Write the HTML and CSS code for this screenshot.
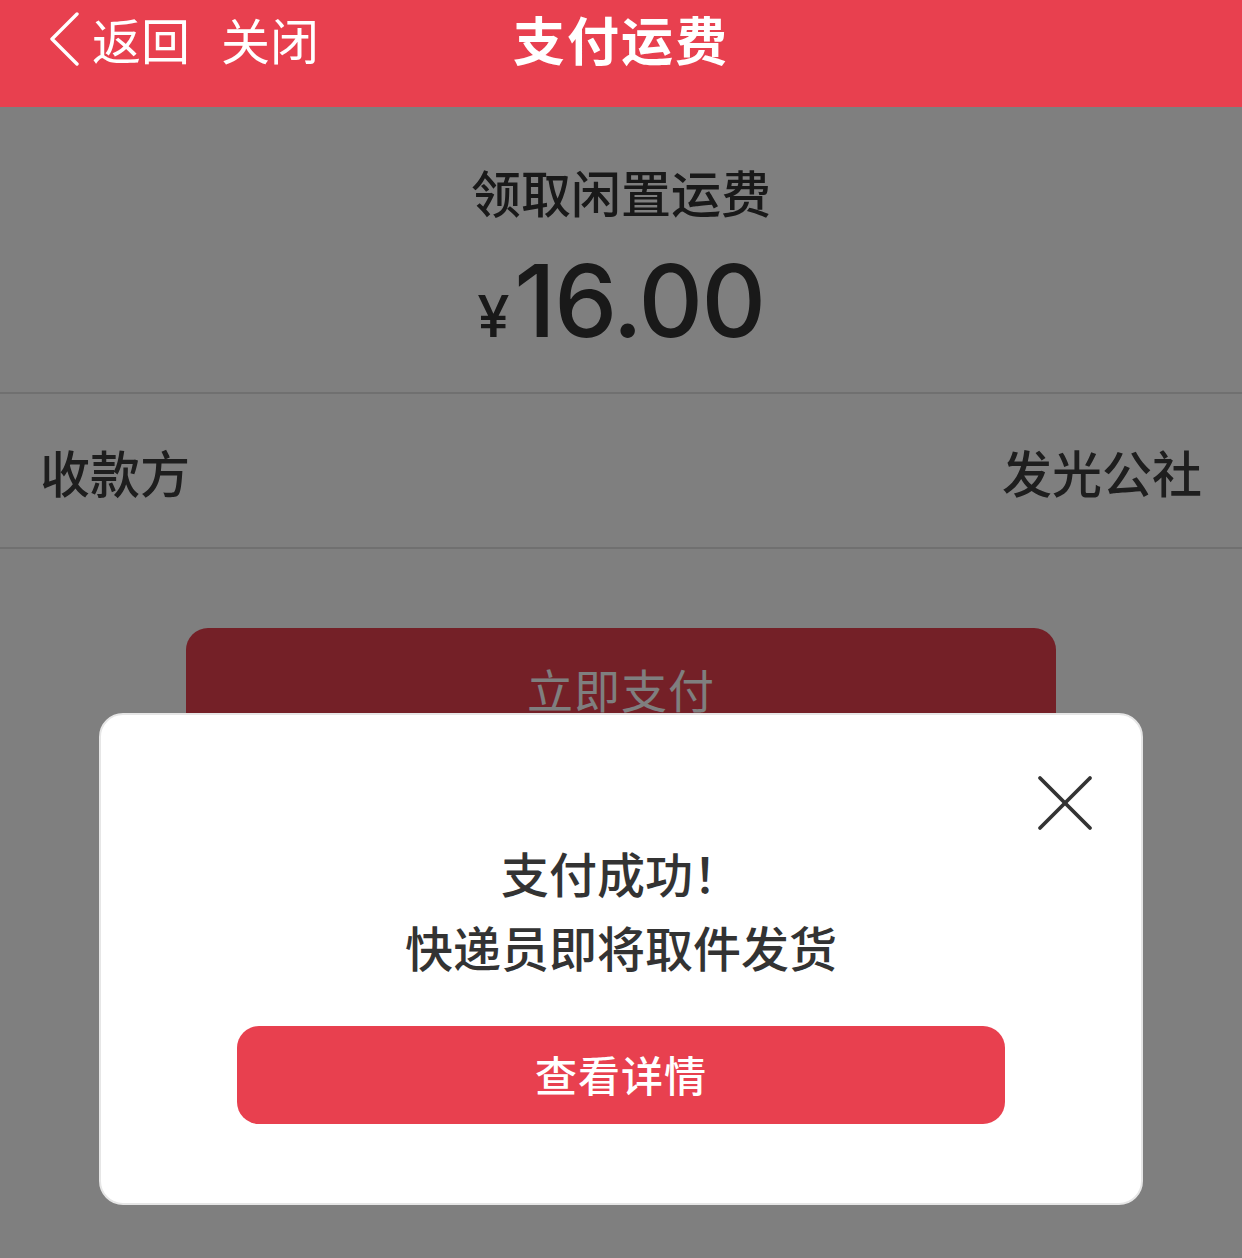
FILE: index.html
```html
<!DOCTYPE html>
<html lang="zh-CN">
<head>
    <meta charset="UTF-8">
    <meta name="viewport" content="width=device-width, initial-scale=1.0">
    <title>支付运费</title>
    <link rel="stylesheet" href="styles.css">
</head>
<body>

<div class="page">
    <!-- Top bar -->
    <header class="topbar">
        <div class="nav-left">
            <span class="nav-link back">
                <svg class="chevron" width="32" height="54" viewBox="0 0 32 54">
                    <polyline points="29,2 4,27 29,52" fill="none" stroke="#fff" stroke-width="3.4" stroke-linecap="round" stroke-linejoin="round"/>
                </svg>
                返回
            </span>
            <span class="nav-link">关闭</span>
        </div>
        <h1 class="title">支付运费</h1>
        <div class="nav-right"></div>
    </header>

    <!-- Order summary -->
    <section class="summary">
        <p class="summary-label">领取闲置运费</p>
        <p class="amount"><span class="currency">¥</span>16.00</p>
    </section>

    <div class="info-row">
        <span>收款方</span>
        <span>发光公社</span>
    </div>

    <div class="pay-wrap">
        <button class="pay-btn">立即支付</button>
    </div>

    <!-- Dim layer and result dialog -->
    <div class="mask"></div>
    <div class="dialog">
        <span class="dialog-close">
            <svg width="56" height="56" viewBox="0 0 56 56">
                <line x1="3" y1="3" x2="53" y2="53" stroke="#333" stroke-width="3.8" stroke-linecap="round"/>
                <line x1="53" y1="3" x2="3" y2="53" stroke="#333" stroke-width="3.8" stroke-linecap="round"/>
            </svg>
        </span>
        <div class="dialog-text">
            <p>支付成功！</p>
            <p>快递员即将取件发货</p>
        </div>
        <button class="detail-btn">查看详情</button>
    </div>
</div>

</body>
</html>
```

FILE: styles.css
```css
* {
    box-sizing: border-box;
}
body {
    margin: 0;
    font-family: "Noto Sans CJK SC", "Noto Sans", sans-serif;
    background-color: #fff;
    color: #333;
}
p {
    margin: 0;
}
.page {
    position: relative;
    width: 1242px;
    height: 1258px;
    overflow: hidden;
    background-color: #fff;
}
.topbar {
    display: grid;
    grid-template-columns: 1fr auto 1fr;
    align-items: center;
    height: 107px;
    padding-bottom: 30px;
    background-color: #e8404f;
    color: #fff;
}
.nav-left {
    display: flex;
    align-items: center;
    gap: 31px;
    padding-left: 48px;
}
.nav-link {
    display: flex;
    align-items: center;
    font-size: 49px;
    line-height: 1;
}
.chevron {
    margin-right: 12px;
}
.title {
    margin: 0;
    font-size: 52px;
    font-weight: bold;
    letter-spacing: 2px;
}
.summary {
    height: 287px;
    padding-top: 46px;
    text-align: center;
    border-bottom: 2px solid #e0e0e0;
}
.summary-label {
    font-size: 50px;
    font-weight: 500;
    line-height: 76px;
    color: #333;
}
.amount {
    margin-top: 22px;
    font-family: "Inter", "Noto Sans", sans-serif;
    font-size: 100px;
    font-weight: 500;
    line-height: 100px;
    letter-spacing: -1.5px;
    color: #333;
}
.currency {
    font-size: 58px;
    margin-right: 6px;
}
.info-row {
    display: flex;
    justify-content: space-between;
    align-items: center;
    height: 155px;
    padding: 0 40px;
    font-size: 50px;
    font-weight: 500;
    color: #3c3c3c;
    border-bottom: 2px solid #e0e0e0;
}
.pay-wrap {
    padding: 79px 186px 0;
}
.pay-btn {
    width: 100%;
    height: 120px;
    border: none;
    border-radius: 22px;
    background-color: #e8404f;
    color: #fff;
    font-family: inherit;
    font-size: 46px;
    letter-spacing: 1px;
}
.mask {
    position: absolute;
    left: 0;
    right: 0;
    top: 107px;
    bottom: 0;
    background-color: rgba(0, 0, 0, 0.5);
}
.dialog {
    position: absolute;
    left: 99px;
    top: 713px;
    width: 1044px;
    height: 492px;
    display: flex;
    flex-direction: column;
    align-items: center;
    padding-top: 120px;
    background-color: #fff;
    border: 2px solid #e6e6e6;
    border-radius: 24px;
}
.dialog-close {
    position: absolute;
    top: 60px;
    right: 48px;
    display: flex;
}
.dialog-text {
    text-align: center;
    font-size: 48px;
    font-weight: 500;
    line-height: 74px;
    color: #333;
}
.detail-btn {
    margin-top: 43px;
    width: 768px;
    height: 98px;
    padding-bottom: 4px;
    border: none;
    border-radius: 22px;
    background-color: #e8404f;
    color: #fff;
    font-family: inherit;
    font-size: 42px;
    font-weight: 500;
    letter-spacing: 1px;
}
```
